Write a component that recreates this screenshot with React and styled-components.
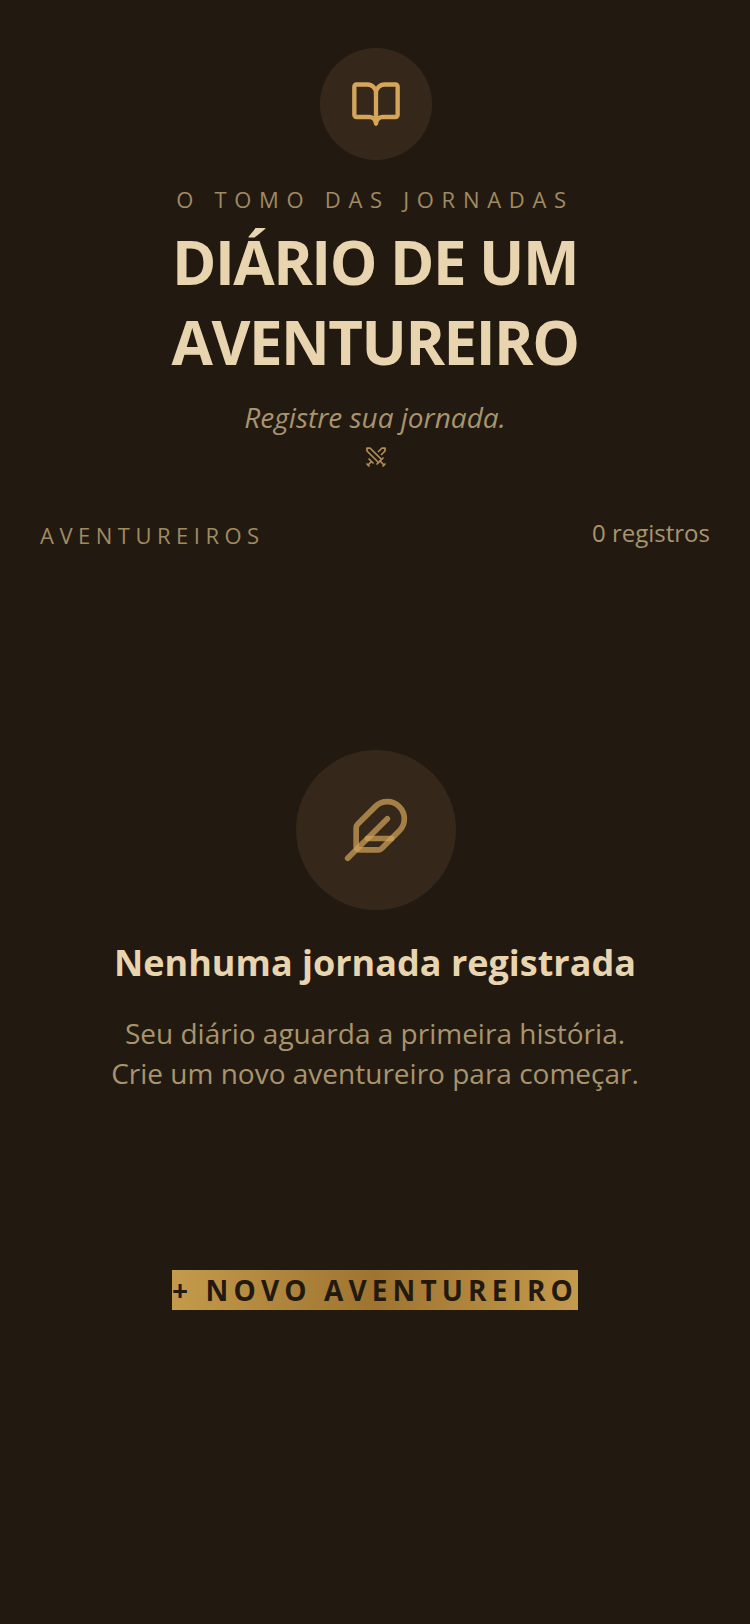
import React from "react";
import styled, { createGlobalStyle } from "styled-components";
import { BookOpen, Feather, Swords } from "lucide-react";

const Global = createGlobalStyle`
  html, body {
    margin: 0;
    padding: 0;
    background: #221a11;
  }
  * {
    box-sizing: border-box;
  }
`;

const Page = styled.div`
  width: 750px;
  height: 1624px;
  background: #221a11;
  font-family: "Open Sans", sans-serif;
  display: flex;
  flex-direction: column;
  align-items: center;
  padding: 48px 40px 0;
`;

const IconCircle = styled.div`
  width: ${(p) => p.size}px;
  height: ${(p) => p.size}px;
  margin-left: 2px;
  border-radius: 50%;
  background: #35281a;
  color: #d4a55a;
  display: flex;
  align-items: center;
  justify-content: center;
  flex-shrink: 0;
`;

const Eyebrow = styled.div`
  margin-top: 24px;
  font-size: 22px;
  line-height: 30px;
  letter-spacing: 0.35em;
  color: #a08a62;
  text-align: center;
`;

const Title = styled.h1`
  margin: 8px 0 0;
  font-size: 60px;
  line-height: 80px;
  font-weight: 700;
  letter-spacing: -0.025em;
  color: #e8d5b0;
  text-align: center;
`;

const Subtitle = styled.div`
  margin-top: 15px;
  font-size: 28px;
  line-height: 40px;
  font-style: italic;
  color: #a8946e;
  text-align: center;
`;

const Divider = styled.div`
  margin: 8px 0 0 2px;
  height: 24px;
  color: #b08d55;
  display: flex;
  align-items: center;
`;

const SectionRow = styled.div`
  width: 100%;
  margin-top: 46px;
  display: flex;
  justify-content: space-between;
  align-items: flex-end;
`;

const SectionLabel = styled.span`
  font-size: 22px;
  line-height: 32px;
  letter-spacing: 0.25em;
  color: #a08a62;
`;

const SectionCount = styled.span`
  font-size: 24px;
  line-height: 36px;
  color: #a8946e;
`;

const Empty = styled.div`
  margin-top: 199px;
  display: flex;
  flex-direction: column;
  align-items: center;
`;

const EmptyTitle = styled.h2`
  margin: 29px 0 0;
  font-size: 36px;
  line-height: 48px;
  font-weight: 700;
  color: #e8d5b0;
  text-align: center;
`;

const EmptyText = styled.p`
  margin: 26px 0 0;
  font-size: 28px;
  line-height: 40px;
  color: #a8946e;
  text-align: center;
`;

const NewButton = styled.button`
  margin-top: 177px;
  height: 40px;
  padding: 0;
  border: none;
  background: linear-gradient(90deg, #c49a4c, #9e7430 50%, #c49a4c);
  color: #221a11;
  font-family: inherit;
  font-size: 28px;
  font-weight: 700;
  letter-spacing: 5.12px;
  white-space: nowrap;
`;

export default function App() {
  return (
    <Page>
      <Global />
      <IconCircle size={112}>
        <BookOpen size={52} />
      </IconCircle>
      <Eyebrow>O TOMO DAS JORNADAS</Eyebrow>
      <Title>
        DIÁRIO DE UM
        <br />
        AVENTUREIRO
      </Title>
      <Subtitle>Registre sua jornada.</Subtitle>
      <Divider>
        <Swords size={24} strokeWidth={1.75} />
      </Divider>
      <SectionRow>
        <SectionLabel>AVENTUREIROS</SectionLabel>
        <SectionCount>0 registros</SectionCount>
      </SectionRow>
      <Empty>
        <IconCircle size={160}>
          <Feather size={68} strokeOpacity={0.7} />
        </IconCircle>
        <EmptyTitle>Nenhuma jornada registrada</EmptyTitle>
        <EmptyText>
          Seu diário aguarda a primeira história.
          <br />
          Crie um novo aventureiro para começar.
        </EmptyText>
      </Empty>
      <NewButton>+ NOVO AVENTUREIRO</NewButton>
    </Page>
  );
}
